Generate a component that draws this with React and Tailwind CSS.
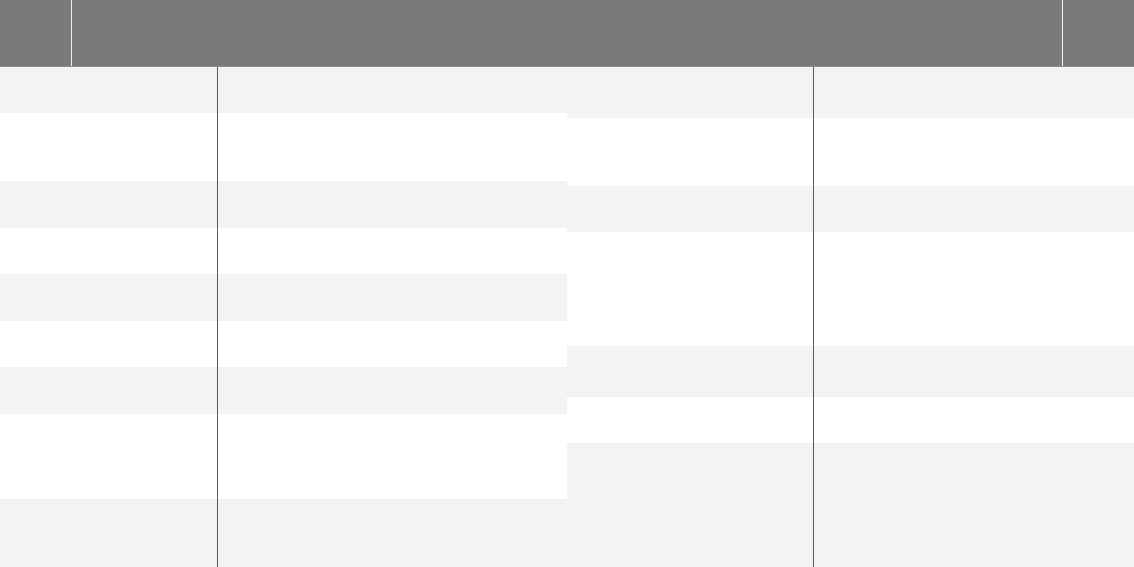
const leftRows = [
    { h: "h-[46px]", shade: true },
    { h: "h-[68px]", shade: false },
    { h: "h-[47px]", shade: true },
    { h: "h-[46px]", shade: false },
    { h: "h-[47px]", shade: true },
    { h: "h-[46px]", shade: false },
    { h: "h-[47px]", shade: true },
    { h: "h-[85px]", shade: false },
    { h: "h-[68px]", shade: true },
];

const rightRows = [
    { h: "h-[51px]", shade: true },
    { h: "h-[68px]", shade: false },
    { h: "h-[46px]", shade: true },
    { h: "h-[114px]", shade: false },
    { h: "h-[51px]", shade: true },
    { h: "h-[46px]", shade: false },
    { h: "h-[124px]", shade: true },
];

const Table = ({ rows, firstCol }) => (
    <div className="relative flex-1 flex flex-col overflow-hidden">
        {rows.map((row, i) => (
            <div
                key={i}
                className={`${row.h} shrink-0 ${row.shade ? "bg-[#f3f3f3]" : "bg-white"}`}
            />
        ))}
        {/* column divider runs over the striped rows */}
        <div className={`absolute top-0 bottom-0 ${firstCol} w-px bg-[#5a5a5a]`} />
    </div>
);

export default function App() {
    return (
        <div className="w-[1134px] h-[567px] overflow-hidden bg-white flex flex-col font-['Liberation_Sans',sans-serif]">
            <header className="h-[67px] shrink-0 flex bg-[#7b7979] border-b border-[#8e8c8c]">
                <div className="w-[72px] border-r border-[#efefef]" />
                <div className="flex-1 border-r border-[#efefef]" />
                <div className="w-[71px]" />
            </header>
            <main className="flex-1 flex">
                <Table rows={leftRows} firstCol="left-[217px]" />
                <Table rows={rightRows} firstCol="left-[246px]" />
            </main>
        </div>
    );
}
